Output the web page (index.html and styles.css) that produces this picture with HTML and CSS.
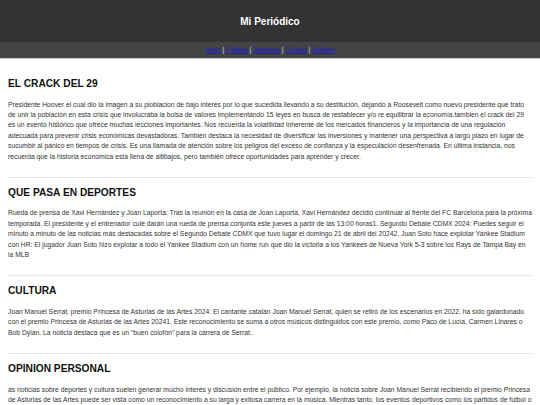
FILE: index.html
```html
<!DOCTYPE html>
<html lang="es">
<head>
<meta charset="utf-8">
<title>Mi Periódico</title>
<link rel="stylesheet" href="styles.css">
</head>
<body>
<header class="site-header">
  <h1 class="site-title">Mi Periódico</h1>
</header>
<nav class="site-nav">
  <a href="#">Inicio</a> | <a href="#">Política</a> | <a href="#">Deportes</a> | <a href="#">Cultura</a> | <a href="#">Opinión</a>
</nav>
<main class="content">
  <section class="article">
    <h2 class="article-title">EL CRACK DEL 29</h2>
    <p class="article-text">Presidente Hoover el cual dio la imagen a su ploblacion de bajo interés por lo que sucedida llevando a su destitución, dejando a Roosevelt como nuevo presidente que trato de unir la población en esta crisis que involucraba la bolsa de valores implementando 15 leyes en busca de restablecer y/o re equilibrar la economía.tambien el crack del 29 es un evento histórico que ofrece muchas lecciones importantes. Nos recuerda la volatilidad inherente de los mercados financieros y la importancia de una regulación adecuada para prevenir crisis económicas devastadoras. También destaca la necesidad de diversificar las inversiones y mantener una perspectiva a largo plazo en lugar de sucumbir al pánico en tiempos de crisis. Es una llamada de atención sobre los peligros del exceso de confianza y la especulación desenfrenada. En última instancia, nos recuerda que la historia económica está llena de altibajos, pero también ofrece oportunidades para aprender y crecer.</p>
  </section>
  <section class="article">
    <h2 class="article-title">QUE PASA EN DEPORTES</h2>
    <p class="article-text">Rueda de prensa de Xavi Hernández y Joan Laporta: Tras la reunión en la casa de Joan Laporta, Xavi Hernández decidió continuar al frente del FC Barcelona para la próxima temporada. El presidente y el entrenador culé darán una rueda de prensa conjunta este jueves a partir de las 13:00 horas1. Segundo Debate CDMX 2024: Puedes seguir el minuto a minuto de las noticias más destacadas sobre el Segundo Debate CDMX que tuvo lugar el domingo 21 de abril del 20242. Juan Soto hace explotar Yankee Stadium con HR: El jugador Juan Soto hizo explotar a todo el Yankee Stadium con un home run que dio la victoria a los Yankees de Nueva York 5-3 sobre los Rays de Tampa Bay en la MLB</p>
  </section>
  <section class="article">
    <h2 class="article-title">CULTURA</h2>
    <p class="article-text">Joan Manuel Serrat, premio Princesa de Asturias de las Artes 2024: El cantante catalán Joan Manuel Serrat, quien se retiró de los escenarios en 2022, ha sido galardonado con el premio Princesa de Asturias de las Artes 20241. Este reconocimiento se suma a otros músicos distinguidos con este premio, como Paco de Lucía, Carmen Linares o Bob Dylan. La noticia destaca que es un “buen colofón” para la carrera de Serrat..</p>
  </section>
  <section class="article">
    <h2 class="article-title">OPINION PERSONAL</h2>
    <p class="article-text">as noticias sobre deportes y cultura suelen generar mucho interés y discusión entre el público. Por ejemplo, la noticia sobre Joan Manuel Serrat recibiendo el premio Princesa de Asturias de las Artes puede ser vista como un reconocimiento a su larga y exitosa carrera en la música. Mientras tanto, los eventos deportivos como los partidos de fútbol o béisbol generan emoción y pasión entre los aficionados, y las decisiones de los entrenadores y jugadores son seguidas de cerca por el público.</p>
  </section>
</main>
</body>
</html>
```
FILE: styles.css
```css
html, body {
  margin: 0;
  padding: 0;
  background: #ffffff;
  font-family: "Liberation Sans", Arial, sans-serif;
  color: #333333;
}

.site-header {
  background: #333333;
  height: 42px;
  display: flex;
  align-items: center;
  justify-content: center;
}

.site-title {
  margin: 0;
  color: #ffffff;
  font-size: 10px;
  font-weight: bold;
  line-height: 13px;
}

.site-nav {
  background: #444444;
  height: 16px;
  line-height: 16px;
  text-align: center;
  font-size: 6.6px;
  color: #dddddd;
  border-bottom: 1px solid #cccccc;
}

.site-nav a {
  color: #1a1acc;
  text-decoration: underline;
}

.content {
  padding: 10px 8px;
}

.article {
  padding: 8px 0 15px;
  border-bottom: 1px solid #e6e6e6;
}

.article-title {
  margin: 0 0 9.5px;
  font-size: 10.2px;
  line-height: 13px;
  color: #111111;
}

.article-text {
  margin: 0;
  font-size: 6.78px;
  line-height: 10.4px;
  color: #333333;
}
```
